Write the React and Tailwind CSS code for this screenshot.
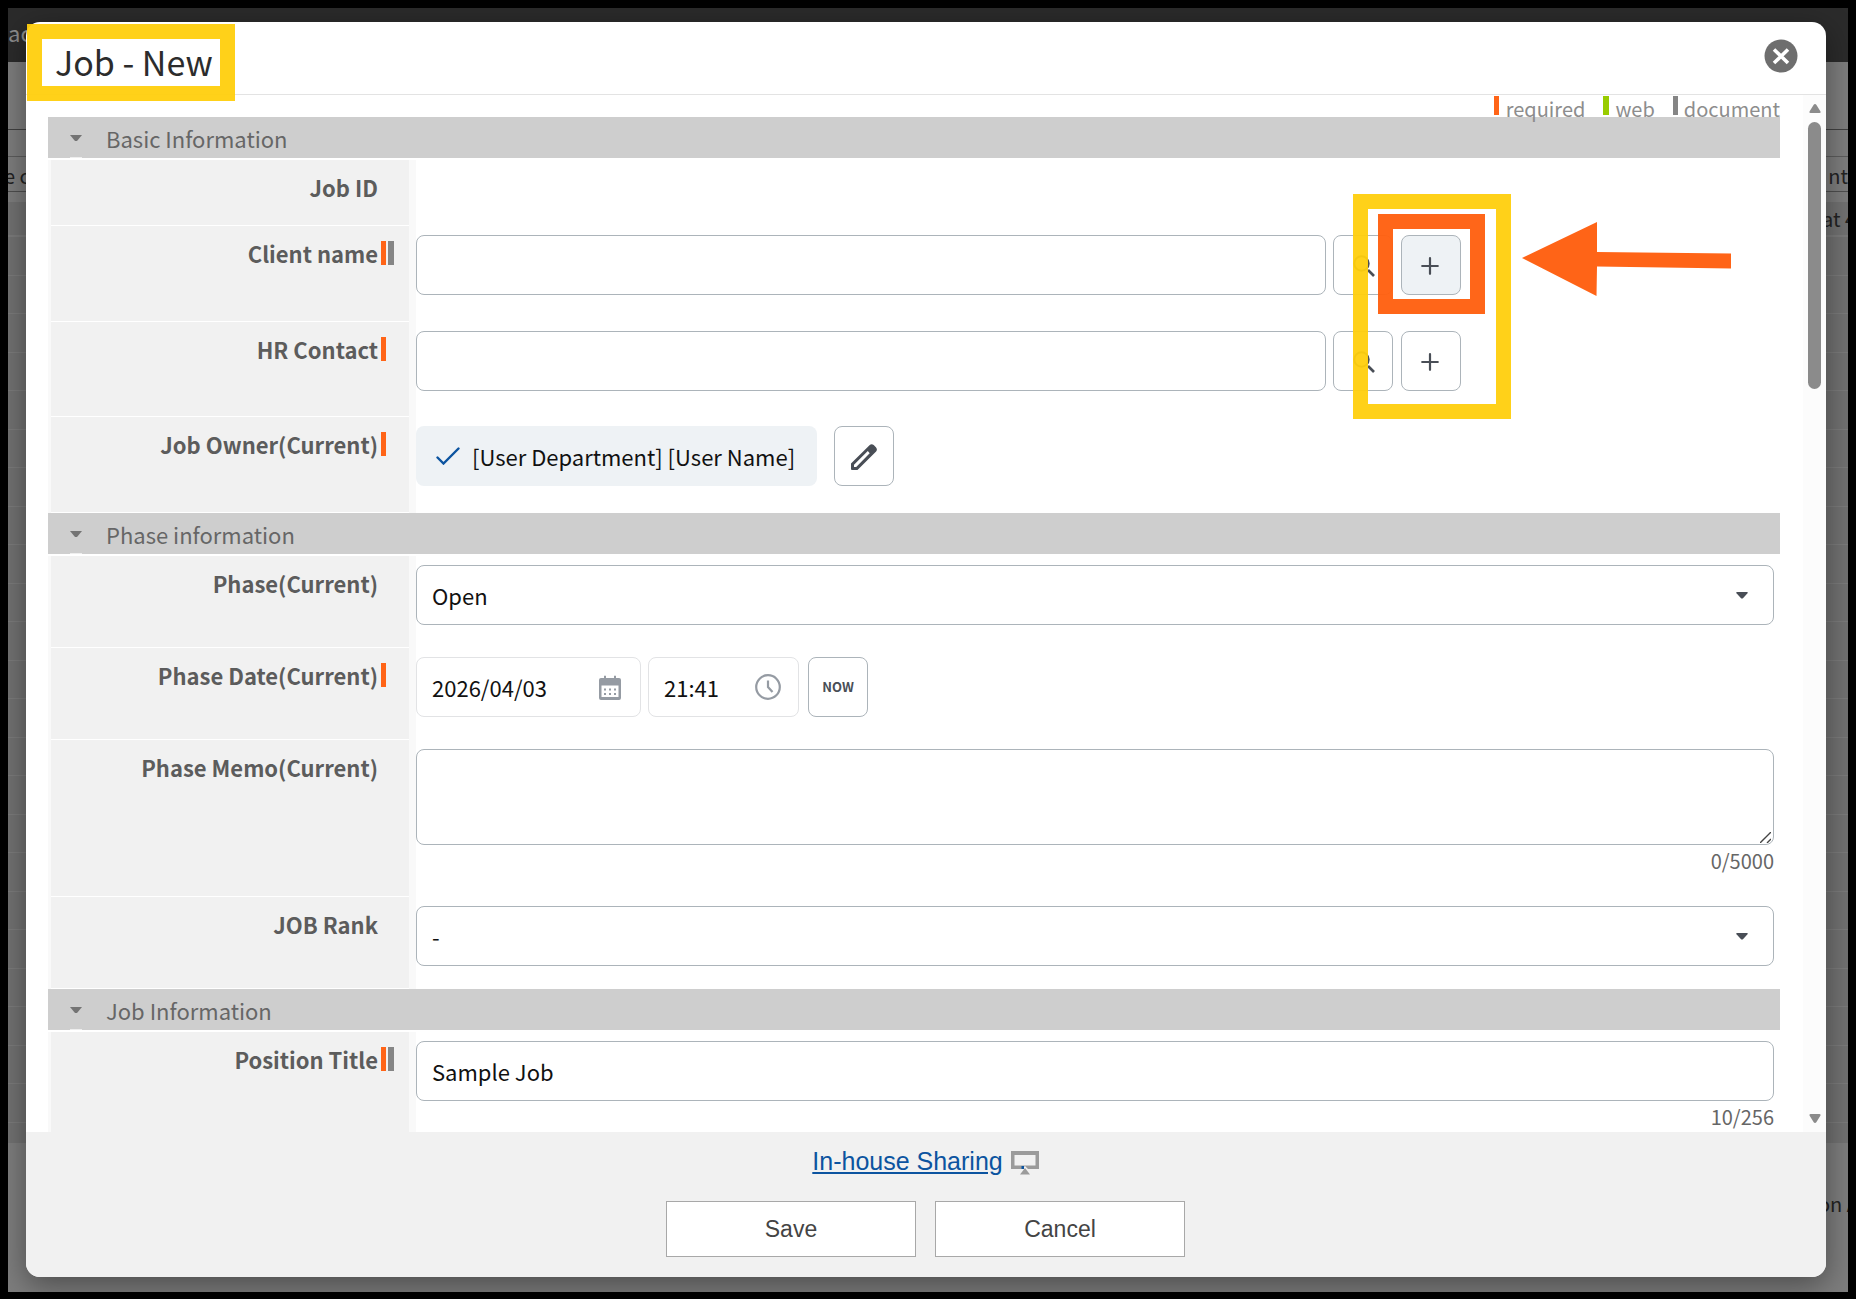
import React, { useState } from "react";

const INPUT_CLASS =
  "block h-[60px] w-full rounded-lg border border-[#acb4ba] bg-white px-[15px] text-[22px] text-[#111111] outline-none";
const SQUARE_BUTTON_CLASS =
  "flex size-[60px] shrink-0 items-center justify-center rounded-lg border border-[#acb4ba] text-[#494e56]";

// Rows of the list page behind the dialog
const LIST_ROWS = Array.from({ length: 23 }, (_, i) => i);

function ListPage() {
  return (
    <div className="absolute inset-0 flex flex-col overflow-hidden bg-[#7d7d7d] text-[20px] text-[#222222]">
      <div className="flex h-[54px] shrink-0 items-center bg-[#2b2b2b] pb-1.5 text-[22px] text-[#8c8c8c]">
        ac
      </div>
      <div className="h-[68px] shrink-0 border-b border-[#414141]" />
      <div className="h-[27px] shrink-0 border-b border-[#5c5c5c]" />
      <div className="flex h-[35px] shrink-0 items-center justify-between border-b border-[#4e4e4e] pt-1">
        <span className="-ml-1">e c</span>
        <span>nt</span>
      </div>
      <div className="h-[10px] shrink-0" />
      <div className="flex h-[35px] shrink-0 items-center justify-end border-b-2 border-[#7b7b7b] bg-[#717171]">
        <span className="w-[26px] whitespace-nowrap">at 4</span>
      </div>
      {LIST_ROWS.map((row) => (
        <div
          key={row}
          className="h-[39px] shrink-0 border-b border-[#7b7b7b] bg-[#717171] even:h-[38px]"
        />
      ))}
      <div className="h-5 shrink-0 bg-[#717171]" />
      <div className="flex flex-1 items-center justify-end pb-7">
        <span className="w-[30px] whitespace-nowrap">on A</span>
      </div>
    </div>
  );
}

function Marks({ required, document }) {
  return (
    <span className="flex w-[31px] shrink-0 gap-0.5 pt-1.5 pl-[3px]">
      {required && <span className="h-6 w-[5px] bg-[#ff6417]" />}
      {document && <span className="h-6 w-1.5 bg-[#858585]" />}
    </span>
  );
}

function Section({ title, children }) {
  return (
    <section>
      <h2 className="mb-0.5 h-[41px] bg-[#cecece]">
        <button
          type="button"
          className="flex h-full w-full items-center pl-[22px] text-left text-[22px] text-[#666666]"
        >
          <svg width="12" height="41" viewBox="0 0 12 41" className="mr-6">
            <path d="M0 18h12L7 24H5Z" fill="#747474" />
            <path d="M0 40h12v1H0Z" fill="#eeeeee" />
          </svg>
          <span className="pt-0.5">{title}</span>
        </button>
      </h2>
      {children}
    </section>
  );
}

function Row({ label, htmlFor, required, document, height, children }) {
  return (
    <div className={`flex ${height}`}>
      <div className="flex w-[368px] shrink-0 bg-[#f9f9f9] pr-[7px] pl-[3px]">
        <div className="flex flex-1 justify-end border-b border-white bg-[#f1f1f1] pt-[9px]">
          <label
            htmlFor={htmlFor}
            className="text-[22px] leading-9 font-bold text-[#5c5c5c]"
          >
            {label}
          </label>
          <Marks required={required} document={document} />
        </div>
      </div>
      <div className="min-w-0 flex-1 pt-[9px] pr-1.5">{children}</div>
    </div>
  );
}

function LookupField({ id, name, active }) {
  return (
    <div className="flex">
      <div className="mr-[7px] w-[67%]">
        <input id={id} type="text" className={INPUT_CLASS} />
      </div>
      <button
        type="button"
        aria-label={`Search ${name}`}
        className={`${SQUARE_BUTTON_CLASS} mr-2 bg-white pt-0.5 pl-0.5`}
      >
        <svg width="22" height="22" viewBox="0 0 22 22" fill="none" stroke="currentColor">
          <circle cx="8.5" cy="8.5" r="7.2" strokeWidth="2" />
          <path d="m15 15 6 6" strokeWidth="2.6" />
        </svg>
      </button>
      <button
        type="button"
        aria-label={`Add ${name}`}
        className={`${SQUARE_BUTTON_CLASS} ${active ? "bg-[#eef2f5]" : "bg-white"}`}
      >
        <svg width="18" height="18" viewBox="0 0 18 18" className="mt-0.5 mr-0.5">
          <path
            d="M9 1.2v15.6M1.2 9h15.6"
            stroke="currentColor"
            strokeWidth="2.2"
            strokeLinecap="round"
          />
        </svg>
      </button>
    </div>
  );
}

function SelectField({ id, options }) {
  return (
    <div className="relative">
      <select id={id} className={`${INPUT_CLASS} appearance-none`}>
        {options.map((option) => (
          <option key={option}>{option}</option>
        ))}
      </select>
      <svg
        width="12"
        height="7"
        viewBox="0 0 12 7"
        className="pointer-events-none absolute top-[27px] right-[26px]"
      >
        <path d="M1 0h10q1.500 0 .5 1.200L7.200 6q-1.200 1-2.400 0L.5 1.200Q-.5 0 1 0Z" fill="#494e56" />
      </svg>
    </div>
  );
}

function Legend() {
  return (
    <div className="relative z-10 flex h-[22px] justify-end text-[20px] leading-[27px] text-[#8d8d8d]">
      <span className="mt-px mr-[7px] h-[19px] w-[5px] bg-[#ff6417]" />
      required
      <span className="mt-px mr-1.5 ml-[18px] h-[19px] w-1.5 bg-[#99cc00]" />
      web
      <span className="mt-px mr-1.5 ml-[18px] h-[19px] w-[5px] bg-[#858585]" />
      document
    </div>
  );
}

function Scrollbar() {
  return (
    <div className="flex w-[23px] shrink-0 flex-col items-center bg-[#fcfcfc] pt-[9px] pb-[9px]">
      <svg width="12" height="9" viewBox="0 0 12 9">
        <path d="M6 0q.8 0 1.300.8L11.500 7.500Q12 9 10.500 9h-9Q0 9 .5 7.500L4.700.8Q5.200 0 6 0Z" fill="#8b8b8b" />
      </svg>
      <div className="mt-[9px] h-[267px] w-[13px] rounded-full bg-[#8b8b8b]" />
      <svg width="12" height="9" viewBox="0 0 12 9" className="mt-auto">
        <path d="M6 9q.8 0 1.300-.8L11.500 1.500Q12 0 10.500 0h-9Q0 0 .5 1.500L4.700 8.200Q5.200 9 6 9Z" fill="#8b8b8b" />
      </svg>
    </div>
  );
}

// Guide marks drawn over the dialog
function Annotations() {
  return (
    <div className="pointer-events-none absolute inset-0 z-20">
      <div className="absolute top-0.5 left-px h-[77px] w-[208px] border-[15px] border-[#ffcf0df2]" />
      <div className="absolute top-[172px] left-[1327px] h-[225px] w-[158px] border-[15px] border-[#ffcf0df2]" />
      <div className="absolute top-[192px] left-[1352px] h-[100px] w-[107px] border-[15px] border-[#ff6010f5]" />
      <svg
        width="210"
        height="76"
        viewBox="0 0 210 76"
        className="absolute top-[199px] left-[1496px]"
      >
        <path d="M0 37 75 1v30l134 1.500v15L75 45.500 74.500 75Z" fill="#ff6417" />
      </svg>
    </div>
  );
}

function App() {
  const [memo, setMemo] = useState("");
  const [title, setTitle] = useState("Sample Job");

  return (
    <div className="h-screen bg-black p-2 pb-[7px] font-['Noto_Sans_CJK_JP','Noto_Sans',sans-serif]">
      <div className="relative h-full overflow-hidden">
        <ListPage />

        <div className="relative h-full pt-[14px] pr-[22px] pb-[15px] pl-[18px]">
          <div
            role="dialog"
            aria-labelledby="dialog-title"
            className="relative flex h-full flex-col rounded-[14px] bg-white shadow-[0_8px_30px_rgba(0,0,0,0.4)]"
          >
            <header className="flex h-[73px] shrink-0 items-center justify-between border-b border-[#e3e3e3] pr-[28px] pl-[29px]">
              <h1 id="dialog-title" className="pt-2 text-[34px] leading-none text-[#2c2c2c]">
                Job - New
              </h1>
              <button type="button" aria-label="Close" className="mb-1">
                <svg width="34" height="34" viewBox="0 0 34 34">
                  <circle cx="17" cy="17" r="16.5" fill="#6e6e6e" />
                  <path d="m10 10.500 14 13.500M24 10.500 10 24" stroke="white" strokeWidth="3.600" />
                </svg>
              </button>
            </header>

            <div className="flex min-h-0 flex-1">
              <form className="min-w-0 flex-1 overflow-hidden pr-[23px] pl-[22px]">
                <Legend />

                <Section title="Basic Information">
                  <Row label="Job ID" height="h-[66px]" />
                  <Row label="Client name" htmlFor="client" required document height="h-24">
                    <LookupField id="client" name="client" active />
                  </Row>
                  <Row label="HR Contact" htmlFor="contact" required height="h-[95px]">
                    <LookupField id="contact" name="contact" />
                  </Row>
                  <Row label="Job Owner(Current)" required height="h-24">
                    <div className="flex gap-[17px]">
                      <div className="flex h-[60px] items-center rounded-lg bg-[#eef2f5] pr-[22px] pl-5 text-[22px] text-[#111111]">
                        <svg width="24" height="18" viewBox="0 0 24 18" className="mr-3">
                          <path
                            d="m1.500 10.500 6 6L22.500 1.500"
                            fill="none"
                            stroke="#0c54a0"
                            strokeWidth="2.400"
                            strokeLinecap="round"
                          />
                        </svg>
                        [User Department] [User Name]
                      </div>
                      <button
                        type="button"
                        aria-label="Edit job owner"
                        className={`${SQUARE_BUTTON_CLASS} bg-white pt-0.5`}
                      >
                        <svg width="26" height="26" viewBox="0 0 26 26">
                          <path
                            fillRule="evenodd"
                            fill="currentColor"
                            d="M0 19.500 18.500 1.200Q20.500-.6 22.700 1l2.200 2.200q1.900 2.200.2 4.300L7 25.500q-.5.500-1.200.5H1q-1 0-1-1ZM3 20.800V23h2.200L18.700 9.200l-1.900-2.200Z"
                          />
                        </svg>
                      </button>
                    </div>
                  </Row>
                </Section>

                <Section title="Phase information">
                  <Row label="Phase(Current)" htmlFor="phase" height="h-[92px]">
                    <SelectField id="phase" options={["Open", "Closed"]} />
                  </Row>
                  <Row label="Phase Date(Current)" htmlFor="phase-date" required height="h-[92px]">
                    <div className="flex">
                      <div className="mr-[7px] flex h-[60px] w-[225px] items-center rounded-lg border border-[#e2e3e5] pr-[19px] pl-[15px]">
                        <input
                          id="phase-date"
                          type="text"
                          defaultValue="2026/04/03"
                          className="min-w-0 flex-1 text-[22px] text-[#111111] outline-none"
                        />
                        <svg width="22" height="25" viewBox="0 0 22 25" fill="#959ba3">
                          <path
                            fillRule="evenodd"
                            d="M5 1q1-1 2 0v2h8V1q1-1 2 0v2h3q2 0 2 2v18q0 2-2 2H2q-2 0-2-2V5q0-2 2-2h3ZM2.500 10.500V22h17V10.500Z"
                          />
                          <path d="M5 13.500h2v2H5zM10 13.500h2v2h-2zM15 13.500h2v2h-2zM5 18h2v2H5zM10 18h2v2h-2zM15 18h2v2h-2z" />
                        </svg>
                      </div>
                      <div className="mr-[9px] flex h-[60px] w-[151px] items-center rounded-lg border border-[#e2e3e5] pr-[17px] pl-[15px]">
                        <input
                          type="text"
                          aria-label="Phase time"
                          defaultValue="21:41"
                          className="min-w-0 flex-1 text-[22px] text-[#111111] outline-none"
                        />
                        <svg width="26" height="26" viewBox="0 0 26 26" fill="none" stroke="#959ba3">
                          <circle cx="13" cy="13" r="11.800" strokeWidth="2.200" />
                          <path d="M13 6.500V13l4.500 5" strokeWidth="2.200" />
                        </svg>
                      </div>
                      <button
                        type="button"
                        className={`${SQUARE_BUTTON_CLASS} bg-white text-[13px] font-bold`}
                      >
                        NOW
                      </button>
                    </div>
                  </Row>
                  <Row label="Phase Memo(Current)" htmlFor="memo" height="h-[157px]">
                    <div className="relative">
                      <textarea
                        id="memo"
                        value={memo}
                        onChange={(e) => setMemo(e.target.value)}
                        className="block h-24 w-full resize-none rounded-lg border border-[#acb4ba] bg-white px-[15px] py-2 text-[22px] outline-none"
                      />
                      <svg
                        width="11"
                        height="11"
                        viewBox="0 0 11 11"
                        className="absolute right-[3px] bottom-0.5"
                      >
                        <path d="M0 11 11 0M7 11l4-4" stroke="#444444" strokeWidth="1.400" />
                      </svg>
                    </div>
                    <p className="text-right text-[20px] leading-8 text-[#666666]">
                      {memo.length}/5000
                    </p>
                  </Row>
                  <Row label="JOB Rank" htmlFor="rank" height="h-[92px]">
                    <SelectField id="rank" options={["-", "A", "B", "C"]} />
                  </Row>
                </Section>

                <Section title="Job Information">
                  <Row
                    label="Position Title"
                    htmlFor="title"
                    required
                    document
                    height="h-[130px]"
                  >
                    <input
                      id="title"
                      type="text"
                      value={title}
                      onChange={(e) => setTitle(e.target.value)}
                      className={INPUT_CLASS}
                    />
                    <p className="text-right text-[20px] leading-8 text-[#666666]">
                      {title.length}/256
                    </p>
                  </Row>
                </Section>
              </form>
              <Scrollbar />
            </div>

            <footer className="flex h-[145px] shrink-0 flex-col items-center rounded-b-[14px] bg-[#f1f1f1] pt-[11px] pr-px font-['Liberation_Sans',Arial,sans-serif]">
              <div className="flex items-center gap-2">
                <a href="#sharing" className="text-[25px] leading-9 text-[#0c54a0] underline">
                  In-house Sharing
                </a>
                <svg width="28" height="24" viewBox="0 0 28 24" className="mt-1">
                  <path
                    fillRule="evenodd"
                    fill="#9b9b9b"
                    d="M0 0h28v18H17l-3-3-3 3H0ZM3.500 4v10.500h21V4Z"
                  />
                  <path d="m14 17 5 6.500H9Z" fill="#9b9b9b" />
                  <path d="M10.500 15h2.500v3h-2.500Z" fill="#0c54a0" />
                </svg>
              </div>
              <div className="mt-[22px] flex gap-[19px] text-[23px] text-[#444444]">
                <button type="button" className="h-14 w-[250px] border border-[#a8a8a8] bg-white">
                  Save
                </button>
                <button type="button" className="h-14 w-[250px] border border-[#a8a8a8] bg-white">
                  Cancel
                </button>
              </div>
            </footer>

            <Annotations />
          </div>
        </div>
      </div>
    </div>
  );
}

export default App;
